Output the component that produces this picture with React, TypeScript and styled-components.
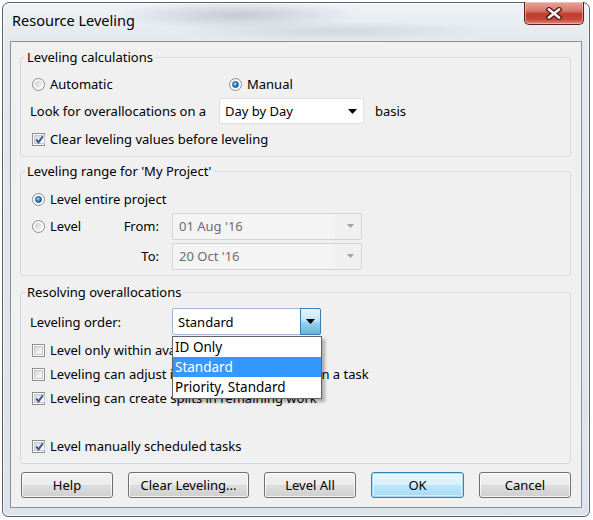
import React from "react";
import styled, { createGlobalStyle, css } from "styled-components";

const GlobalStyle = createGlobalStyle`
  html, body { margin: 0; padding: 0; background: #ffffff; }
  body {
    font-family: "Noto Sans", "DejaVu Sans", sans-serif;
    font-size: 13px;
    color: #000;
  }
  * { box-sizing: border-box; }
`;

const Window = styled.div`
  margin: 2px 0 0 2px;
  width: 588px;
  height: 515px;
  border: 1px solid #5b6169;
  border-radius: 7px 7px 6px 6px;
  padding: 0 7px 8px 7px;
  display: flex;
  flex-direction: column;
  background:
    radial-gradient(ellipse 120px 14px at 235px 12px, rgba(150, 158, 168, 0.45), transparent),
    radial-gradient(ellipse 160px 10px at 330px 28px, rgba(170, 178, 188, 0.35), transparent),
    linear-gradient(180deg, #eef2f6 0%, #e3e8ee 8%, #dde3ea 100%);
  box-shadow: inset 0 0 0 1px rgba(255, 255, 255, 0.65);
`;

const TitleBar = styled.div`
  height: 38px;
  display: flex;
  align-items: flex-start;
  justify-content: space-between;
`;

const Title = styled.div`
  padding: 7px 0 0 2px;
  font-size: 14.5px;
  line-height: 20px;
`;

const CloseButton = styled.div`
  width: 60px;
  height: 23px;
  margin: -1px -2px 0 0;
  border: 1px solid #5a1f19;
  border-top: none;
  border-radius: 0 0 5px 5px;
  display: flex;
  align-items: center;
  justify-content: center;
  background: linear-gradient(
    180deg,
    #e8a79a 0%,
    #d5786b 40%,
    #c13a2a 55%,
    #c6483a 80%,
    #e08c7c 100%
  );
  box-shadow: inset 0 0 0 1px rgba(255, 210, 200, 0.55);
`;

const Client = styled.div`
  flex: 1;
  border: 1px solid #8c9197;
  background: #f0f0f0;
  padding: 6px 10px 9px 9px;
  display: flex;
  flex-direction: column;
`;

const Group = styled.fieldset<{ $pt: number; $mt?: number }>`
  margin: ${(p) => p.$mt ?? 0}px 0 0 0;
  padding: ${(p) => p.$pt}px 8px 5px 9px;
  border: 1px solid #d3dbe2;
  border-radius: 3px;
  display: flex;
  flex-direction: column;
  min-width: 0;
`;

const Legend = styled.legend`
  padding: 0 2px;
  margin-left: -5px;
  line-height: 18px;
`;

const Row = styled.div<{ $h: number; $mt?: number }>`
  display: flex;
  align-items: center;
  height: ${(p) => p.$h}px;
  margin-top: ${(p) => p.$mt ?? 0}px;
  white-space: nowrap;
`;

const Cell = styled.div<{ $w: number; $end?: boolean }>`
  width: ${(p) => p.$w}px;
  display: flex;
  align-items: center;
  justify-content: ${(p) => (p.$end ? "flex-end" : "space-between")};
  padding-right: ${(p) => (p.$end !== undefined ? 13 : 0)}px;
`;

const Option = styled.div<{ $w?: number }>`
  display: flex;
  align-items: center;
  gap: 5px;
  width: ${(p) => (p.$w ? `${p.$w}px` : "auto")};
`;

const RadioMark = styled.span<{ $on?: boolean }>`
  position: relative;
  flex: none;
  width: 13px;
  height: 13px;
  margin-left: 2px;
  border-radius: 50%;
  border: 1px solid #8b8d90;
  background: linear-gradient(135deg, #f4f4f4, #ffffff);
  &::after {
    content: "";
    position: absolute;
    inset: 2px;
    border-radius: 50%;
    ${(p) =>
      p.$on
        ? css`
            border: 1px solid #1f4f86;
            background: radial-gradient(circle at 40% 35%, #b8e4fb 0%, #3f9be0 40%, #15599f 75%, #0d3d73 100%);
          `
        : css`
            background: linear-gradient(135deg, #c9cbcf 0%, #e4e5e7 55%, #f7f7f7 100%);
          `}
  }
`;

const CheckMark = styled.span`
  flex: none;
  width: 13px;
  height: 13px;
  margin-left: 2px;
  border: 1px solid #8e8f8f;
  background: #fff;
  padding: 1px;
  display: flex;
  & > span {
    flex: 1;
    display: flex;
    align-items: center;
    justify-content: center;
    border: 1px solid #c5c8cc;
    background: linear-gradient(135deg, #d4d6da 0%, #eceef0 60%, #fbfbfb 100%);
  }
`;

const Combo = styled.div<{ $w: number; $h: number; $mode?: "disabled" | "active" }>`
  position: relative;
  width: ${(p) => p.$w}px;
  height: ${(p) => p.$h}px;
  display: flex;
  align-items: center;
  padding-left: 5px;
  border: 1px solid #dcdfe3;
  border-radius: 2px;
  background: #fff;
  ${(p) =>
    p.$mode === "disabled" &&
    css`
      padding-left: 6px;
      border-color: #d4d4d4;
      background: linear-gradient(90deg, #f4f4f4 0, #f4f4f4 calc(100% - 26px), #f0f0f0 calc(100% - 26px));
      color: #6d6d6d;
    `}
  ${(p) =>
    p.$mode === "active" &&
    css`
      border-color: #9fb9d3;
    `}
`;

const ComboText = styled.span`
  flex: 1;
`;

const ArrowZone = styled.span<{ $blue?: boolean }>`
  width: ${(p) => (p.$blue ? 21 : 22)}px;
  align-self: stretch;
  display: flex;
  align-items: center;
  justify-content: center;
  ${(p) =>
    p.$blue &&
    css`
      margin: -1px -1px -1px 0;
      border: 1px solid #3c7fb1;
      border-radius: 0 2px 2px 0;
      background: linear-gradient(180deg, #e5f4fc 0%, #c4e5f6 45%, #98d1ef 55%, #68b3db 100%);
    `}
`;

const DropList = styled.div`
  position: absolute;
  top: 27px;
  left: -1px;
  width: 150px;
  z-index: 2;
  border: 1px solid #646464;
  background: #fff;
  padding: 0 0 1px 0;
  box-shadow: 3px 3px 3px rgba(0, 0, 0, 0.28);
  color: #000;
`;

const ListItem = styled.div<{ $sel?: boolean }>`
  height: 20px;
  line-height: 20px;
  padding-left: 2px;
  font-size: 13.5px;
  ${(p) =>
    p.$sel &&
    css`
      background: #3399ff;
      color: #fff;
    `}
`;

const Basis = styled.span`
  margin-left: 11px;
`;

const Spacer = styled.div`
  height: 24px;
`;

const ButtonRow = styled.div`
  margin-top: 8px;
  padding-left: 1px;
  display: flex;
  gap: 15px;
`;

const Button = styled.div<{ $w: number; $primary?: boolean }>`
  width: ${(p) => p.$w}px;
  height: 26px;
  display: flex;
  align-items: center;
  justify-content: center;
  border: 1px solid #707070;
  border-radius: 3px;
  background: linear-gradient(180deg, #f2f2f2 0%, #ebebeb 48%, #dddddd 52%, #cfcfcf 100%);
  box-shadow: inset 0 0 0 1px rgba(255, 255, 255, 0.75);
  ${(p) =>
    p.$primary &&
    css`
      border-color: #3c7fb1;
      background: linear-gradient(180deg, #eaf6fd 0%, #d9f0fc 48%, #bee6fd 52%, #a7d9f5 100%);
      box-shadow: inset 0 0 0 1px #a6dcf6, inset 0 0 0 2px rgba(255, 255, 255, 0.5);
    `}
`;

const Radio = ({ on, label, w }: { on?: boolean; label: string; w?: number }) => (
  <Option $w={w}>
    <RadioMark $on={on} />
    <span>{label}</span>
  </Option>
);

const Check = ({ on, label }: { on?: boolean; label: string }) => (
  <Option>
    <CheckMark>
      <span>
        {on && (
          <svg width="9" height="9" viewBox="0 0 9 9">
            <path d="M1.2 4.6 L3.5 7.4 L7.9 1.2" fill="none" stroke="#3a4f8e" strokeWidth="1.9" />
          </svg>
        )}
      </span>
    </CheckMark>
    <span>{label}</span>
  </Option>
);

const Arrow = ({ color = "#000", small }: { color?: string; small?: boolean }) => (
  <svg width={small ? 7 : 9} height={small ? 4 : 5} viewBox="0 0 9 5">
    <path d="M0 0 L9 0 L4.5 5 Z" fill={color} />
  </svg>
);

export default function App() {
  return (
    <>
      <GlobalStyle />
      <Window>
        <TitleBar>
          <Title>Resource Leveling</Title>
          <CloseButton>
            <svg width="18" height="13" viewBox="0 0 18 13">
              <path d="M4 2.5 L14 10.5 M14 2.5 L4 10.5" stroke="#4a1610" strokeWidth="5" strokeLinecap="square" />
              <path d="M4 2.5 L14 10.5 M14 2.5 L4 10.5" stroke="#f4f4f4" strokeWidth="2.6" strokeLinecap="square" />
            </svg>
          </CloseButton>
        </TitleBar>
        <Client>
          <Group $pt={6}>
            <Legend>Leveling calculations</Legend>
            <Row $h={24}>
              <Radio label="Automatic" w={197} />
              <Radio on label="Manual" />
            </Row>
            <Row $h={26} $mt={2}>
              <Cell $w={189}>Look for overallocations on a</Cell>
              <Combo $w={145} $h={26}>
                <ComboText>Day by Day</ComboText>
                <ArrowZone>
                  <Arrow />
                </ArrowZone>
              </Combo>
              <Basis>basis</Basis>
            </Row>
            <Row $h={24} $mt={3}>
              <Check on label="Clear leveling values before leveling" />
            </Row>
          </Group>

          <Group $pt={7} $mt={5}>
            <Legend>Leveling range for 'My Project'</Legend>
            <Row $h={24}>
              <Radio on label="Level entire project" />
            </Row>
            <Row $h={28} $mt={1}>
              <Cell $w={142} $end={false}>
                <Radio label="Level" />
                <span>From:</span>
              </Cell>
              <Combo $w={190} $h={27} $mode="disabled">
                <ComboText>01 Aug '16</ComboText>
                <ArrowZone>
                  <Arrow color="#a2a2a2" small />
                </ArrowZone>
              </Combo>
            </Row>
            <Row $h={28} $mt={2}>
              <Cell $w={142} $end>
                To:
              </Cell>
              <Combo $w={190} $h={27} $mode="disabled">
                <ComboText>20 Oct '16</ComboText>
                <ArrowZone>
                  <Arrow color="#a2a2a2" small />
                </ArrowZone>
              </Combo>
            </Row>
          </Group>

          <Group $pt={7} $mt={7}>
            <Legend>Resolving overallocations</Legend>
            <Row $h={27}>
              <Cell $w={142}>Leveling order:</Cell>
              <Combo $w={149} $h={27} $mode="active">
                <ComboText>Standard</ComboText>
                <ArrowZone $blue>
                  <Arrow />
                </ArrowZone>
                <DropList>
                  <ListItem>ID Only</ListItem>
                  <ListItem $sel>Standard</ListItem>
                  <ListItem>Priority, Standard</ListItem>
                </DropList>
              </Combo>
            </Row>
            <Row $h={24} $mt={3}>
              <Check label="Level only within available slack" />
            </Row>
            <Row $h={24}>
              <Check label="Leveling can adjust individual assignments on a task" />
            </Row>
            <Row $h={24}>
              <Check on label="Leveling can create splits in remaining work" />
            </Row>
            <Spacer />
            <Row $h={24}>
              <Check on label="Level manually scheduled tasks" />
            </Row>
          </Group>

          <ButtonRow>
            <Button $w={92}>Help</Button>
            <Button $w={121}>Clear Leveling...</Button>
            <Button $w={92}>Level All</Button>
            <Button $w={93} $primary>
              OK
            </Button>
            <Button $w={92}>Cancel</Button>
          </ButtonRow>
        </Client>
      </Window>
    </>
  );
}
